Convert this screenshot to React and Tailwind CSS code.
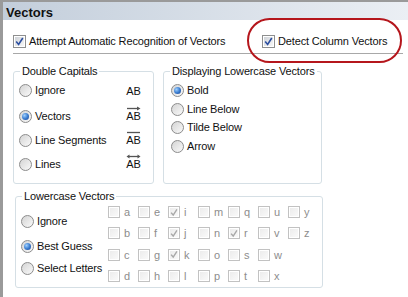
import React from "react";

const Check = ({ checked, disabled, size = 13 }) => (
  <div
    className={
      size === 13
        ? "w-[13px] h-[13px] shrink-0 border p-px bg-white " +
          (disabled ? "border-[#c2c2c2]" : "border-[#8e8f8f]")
        : "w-[12px] h-[12px] shrink-0 border p-px bg-white " +
          (disabled ? "border-[#c2c2c2]" : "border-[#8e8f8f]")
    }
  >
    <div
      className={
        "w-full h-full flex items-center justify-center bg-linear-to-br " +
        (disabled ? "from-[#ececec] to-[#f9f9f9]" : "from-[#cfd3d8] to-[#f7f7f7]")
      }
    >
      {checked && (
        <svg width="9" height="9" viewBox="0 0 9 9">
          <path
            d="M1.2 4.6 L3.6 7.4 L7.8 1"
            fill="none"
            stroke={disabled ? "#a8a8a8" : "#2b4ea0"}
            strokeWidth="1.6"
          />
        </svg>
      )}
    </div>
  </div>
);

const Radio = ({ selected }) => (
  <div className="w-[13px] h-[13px] shrink-0 rounded-full border border-[#8c8c8c] bg-linear-to-br from-[#d4d4d4] to-[#fafafa] flex items-center justify-center">
    {selected && (
      <div className="w-[7px] h-[7px] rounded-full bg-radial-[at_35%_35%] from-[#9fd0ff] via-[#3d7fd1] to-[#173f8f]" />
    )}
  </div>
);

const ABIcon = ({ type }) => (
  <div className={"w-[15px] flex flex-col items-center " + (type === "none" ? "mt-[2px]" : "mb-[4px]")}>
    {type !== "none" && (
      <svg width="15" height="5" viewBox="0 0 15 5">
        {type === "bar" && <line x1="1" y1="2.5" x2="14" y2="2.5" stroke="#555" strokeWidth="1.3" />}
        {type === "arrow" && (
          <>
            <line x1="1" y1="2.5" x2="13" y2="2.5" stroke="#555" strokeWidth="1.3" />
            <path d="M11 0.5 L14.5 2.5 L11 4.5 Z" fill="#555" />
          </>
        )}
        {type === "both" && (
          <>
            <line x1="2" y1="2.5" x2="13" y2="2.5" stroke="#555" strokeWidth="1.3" />
            <path d="M11.5 0.5 L14.5 2.5 L11.5 4.5 Z" fill="#555" />
            <path d="M3.5 0.5 L0.5 2.5 L3.5 4.5 Z" fill="#555" />
          </>
        )}
      </svg>
    )}
    <span className="leading-[11px] text-[#111]">AB</span>
  </div>
);

const RadioRow = ({ label, selected, className = "" }) => (
  <div className={"flex items-center " + className}>
    <Radio selected={selected} />
    <span className="ml-[3px]">{label}</span>
  </div>
);

const letters = [
  ["a", "e", "i", "m", "q", "u", "y"],
  ["b", "f", "j", "n", "r", "v", "z"],
  ["c", "g", "k", "o", "s", "w", null],
  ["d", "h", "l", "p", "t", "x", null],
];
const checkedLetters = ["i", "j", "k", "r"];

export default function App() {
  return (
    <div className="w-[408px] h-[297px] relative overflow-hidden bg-white border-t-2 border-l-[3px] border-[#9a9a9a] font-['Liberation_Sans',Arial,sans-serif] text-[11px] leading-[13px] tracking-[-0.15px] text-[#111]">
      <div className="h-[18px] bg-linear-to-r from-[#c3cedb] to-[#ebeff4] flex items-center pl-[3px]">
        <span className="text-[13px] font-bold pt-[2px] tracking-normal">Vectors</span>
      </div>

      <div className="flex items-center h-[16px] mt-[13px] pl-[10px]">
        <div className="flex items-center w-[249px]">
          <Check checked />
          <span className="ml-[3px]">Attempt Automatic Recognition of Vectors</span>
        </div>
        <div className="flex items-center">
          <Check checked />
          <span className="ml-[3px]">Detect Column Vectors</span>
        </div>
      </div>

      <div className="ml-[10px] mt-[4px] w-[390px] border-t border-[#a8a8a8]" />

      <div className="flex ml-[10px] mt-[11px] gap-[9px]">
        <fieldset className="w-[141px] h-[119px] border border-[#d5dfe5] rounded-[3px]">
          <legend className="ml-[6px] px-[2px]">Double Capitals</legend>
          <div className="flex flex-col pl-[5px] pr-[12px]">
            <div className="flex items-center h-[24px] mb-[2px]">
              <RadioRow label="Ignore" />
              <div className="ml-auto"><ABIcon type="none" /></div>
            </div>
            <div className="flex items-center h-[24px]">
              <RadioRow label="Vectors" selected />
              <div className="ml-auto"><ABIcon type="arrow" /></div>
            </div>
            <div className="flex items-center h-[24px]">
              <RadioRow label="Line Segments" />
              <div className="ml-auto"><ABIcon type="bar" /></div>
            </div>
            <div className="flex items-center h-[24px]">
              <RadioRow label="Lines" />
              <div className="ml-auto"><ABIcon type="both" /></div>
            </div>
          </div>
        </fieldset>

        <fieldset className="w-[159px] h-[119px] border border-[#d5dfe5] rounded-[3px]">
          <legend className="ml-[6px] px-[2px]">Displaying Lowercase Vectors</legend>
          <div className="flex flex-col pl-[7px] pt-[3px]">
            <RadioRow label="Bold" selected className="h-[18.7px]" />
            <RadioRow label="Line Below" className="h-[18.7px]" />
            <RadioRow label="Tilde Below" className="h-[18.7px]" />
            <RadioRow label="Arrow" className="h-[18.7px]" />
          </div>
        </fieldset>
      </div>

      <fieldset className="ml-[12px] mt-[6px] w-[308px] h-[98px] border border-[#d5dfe5] rounded-[3px]">
        <legend className="ml-[6px] px-[2px]">Lowercase Vectors</legend>
        <div className="flex">
          <div className="w-[92px] flex flex-col pl-[5px] pt-[11px]">
            <RadioRow label="Ignore" className="h-[14px] mb-[11px]" />
            <RadioRow label="Best Guess" selected className="h-[14px] mb-[8px]" />
            <RadioRow label="Select Letters" className="h-[14px]" />
          </div>
          <div className="flex flex-col pt-[3px]">
            {letters.map((row, ri) => (
              <div key={ri} className="flex h-[21.3px]">
                {row.map((l, ci) =>
                  l ? (
                    <div key={ci} className="w-[30px] flex items-start">
                      <Check size={12} disabled checked={checkedLetters.includes(l)} />
                      <span className="ml-[4px] leading-[12px] text-[#8d8d8d]">{l}</span>
                    </div>
                  ) : (
                    <div key={ci} className="w-[30px]" />
                  )
                )}
              </div>
            ))}
          </div>
        </div>
      </fieldset>

      <div className="absolute left-[244px] top-[16px] w-[155px] h-[45px] border-2 border-[#b5161c] rounded-[24px]" />
    </div>
  );
}
